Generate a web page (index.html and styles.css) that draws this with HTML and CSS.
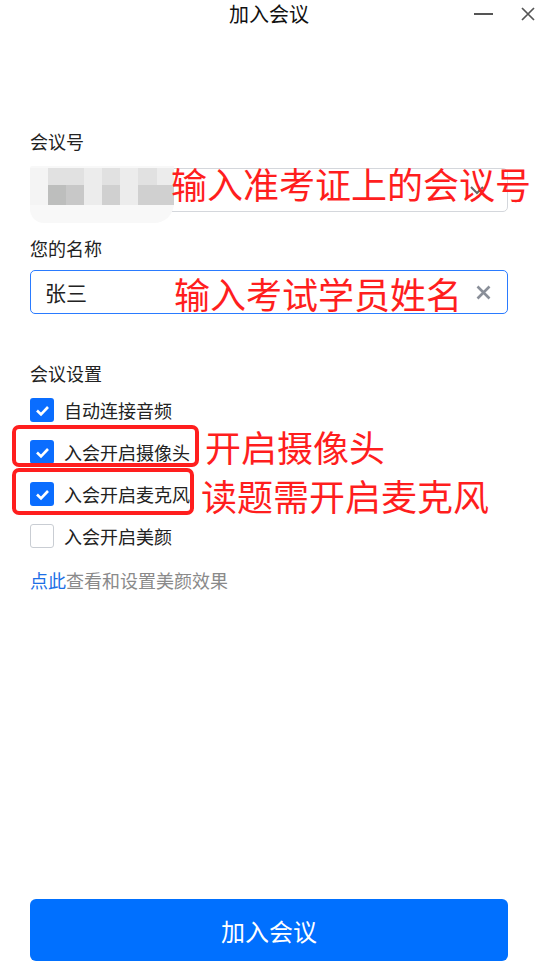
FILE: index.html
```html
<!DOCTYPE html>
<html lang="zh-CN">
<head>
    <meta charset="UTF-8">
    <meta name="viewport" content="width=device-width, initial-scale=1.0">
    <title>加入会议</title>
    <link rel="stylesheet" href="styles.css">
</head>
<body>

    <div class="window">
        <div class="titlebar">
            <span class="title">加入会议</span>
            <div class="controls">
                <svg width="19" height="4" viewBox="0 0 19 4"><line x1="0" y1="2" x2="19" y2="2" stroke="#555" stroke-width="2"/></svg>
                <svg width="14" height="14" viewBox="0 0 14 14"><path d="M1 1 L13 13 M13 1 L1 13" stroke="#555" stroke-width="1.7" fill="none"/></svg>
            </div>
        </div>

        <div class="content">
            <div class="label first">会议号</div>
            <div class="input input-number">
                <svg width="14" height="9" viewBox="0 0 14 9"><path d="M1 1 L7 7 L13 1" stroke="#666" stroke-width="2" fill="none"/></svg>
            </div>

            <div class="label second">您的名称</div>
            <div class="input input-name">
                <span class="value">张三</span>
                <svg width="15" height="15" viewBox="0 0 15 15"><path d="M1.5 1.5 L13.5 13.5 M13.5 1.5 L1.5 13.5" stroke="#8a8f99" stroke-width="2.6" fill="none"/></svg>
            </div>

            <div class="label third">会议设置</div>
            <div class="options">
                <div class="option">
                    <span class="box checked"><svg width="23" height="23" viewBox="0 0 23 23"><path d="M6 11.5 L10 15.5 L17 8" stroke="#fff" stroke-width="2.6" fill="none"/></svg></span>
                    <span>自动连接音频</span>
                </div>
                <div class="option">
                    <span class="box checked"><svg width="23" height="23" viewBox="0 0 23 23"><path d="M6 11.5 L10 15.5 L17 8" stroke="#fff" stroke-width="2.6" fill="none"/></svg></span>
                    <span>入会开启摄像头</span>
                </div>
                <div class="option">
                    <span class="box checked"><svg width="23" height="23" viewBox="0 0 23 23"><path d="M6 11.5 L10 15.5 L17 8" stroke="#fff" stroke-width="2.6" fill="none"/></svg></span>
                    <span>入会开启麦克风</span>
                </div>
                <div class="option">
                    <span class="box"></span>
                    <span>入会开启美颜</span>
                </div>
            </div>

            <div class="link"><span class="link-blue">点此</span>查看和设置美颜效果</div>
        </div>

        <button class="join">加入会议</button>

        <!-- mosaic over the meeting number -->
        <div class="blur">
            <span class="s0"></span><span class="s2"></span><span class="s2"></span><span class="s1"></span><span class="s2"></span><span class="s1"></span><span class="s2"></span><span class="s1"></span>
            <span class="s0"></span><span class="s5"></span><span class="s4"></span><span class="s1"></span><span class="s3"></span><span class="s1"></span><span class="s3"></span><span class="s3"></span>
        </div>

        <!-- annotations -->
        <div class="mark mark-cam"></div>
        <div class="mark mark-mic"></div>
        <div class="note note-number">输入准考证上的会议号</div>
        <div class="note note-name">输入考试学员姓名</div>
        <div class="note note-cam">开启摄像头</div>
        <div class="note note-mic">读题需开启麦克风</div>
    </div>

</body>
</html>
```

FILE: styles.css
```css
body {
    margin: 0;
    background-color: #fff;
    font-family: "Noto Sans CJK SC", "Noto Sans", sans-serif;
    color: #222;
}
.window {
    position: relative;
    width: 543px;
    height: 967px;
    display: flex;
    flex-direction: column;
    overflow: hidden;
}
.titlebar {
    height: 28px;
    display: flex;
    align-items: center;
}
.title {
    flex: 1;
    text-align: center;
    padding-left: 64px;
    font-size: 20px;
    line-height: 28px;
    color: #111;
}
.controls {
    display: flex;
    align-items: center;
    gap: 28px;
    padding-right: 8px;
}
.content {
    padding: 0 35px 0 30px;
}
.label {
    font-size: 18px;
    line-height: 24px;
    color: #222;
}
.label.first {
    margin-top: 101px;
}
.label.second {
    margin-top: 24px;
}
.label.third {
    margin-top: 47px;
}
.input {
    height: 44px;
    box-sizing: border-box;
    border-radius: 5px;
    display: flex;
    align-items: center;
    justify-content: space-between;
}
.input-number {
    margin-top: 15px;
    border: 1px solid #d4d7dc;
    justify-content: flex-end;
    padding-right: 23px;
}
.input-name {
    margin-top: 10px;
    border: 1.5px solid #2a7bff;
    padding: 0 16px 0 14px;
}
.value {
    font-size: 21px;
    color: #222;
}
.options {
    margin-top: 4px;
}
.option {
    height: 42px;
    display: flex;
    align-items: center;
    gap: 10px;
    font-size: 18px;
    color: #222;
}
.box {
    width: 24px;
    height: 24px;
    box-sizing: border-box;
    border-radius: 3px;
    border: 1.5px solid #c9cdd3;
    background-color: #fff;
    display: flex;
    align-items: center;
    justify-content: center;
}
.box.checked {
    border: none;
    background-color: #0a6dff;
}
.link {
    margin-top: 11px;
    font-size: 18px;
    line-height: 24px;
    color: #8a8a8a;
}
.link-blue {
    color: #1c6fe6;
}
.join {
    margin: auto 35px 6px 30px;
    height: 62px;
    border: none;
    border-radius: 6px;
    background-color: #0070ff;
    color: #fff;
    font-family: inherit;
    font-size: 24px;
}

/* mosaic */
.blur {
    position: absolute;
    left: 30px;
    top: 166px;
    width: 144px;
    height: 57px;
    padding-top: 2px;
    box-sizing: border-box;
    background-color: #f8f8f8;
    border-radius: 2px 0 20px 14px;
    display: grid;
    grid-template-columns: 18px 18px 18px 18px 18px 18px 19px 17px;
    grid-template-rows: 17px 20px;
}
.s0 { background-color: #f4f4f4; }
.s1 { background-color: #ececec; }
.s2 { background-color: #e1e1e1; }
.s3 { background-color: #d0d0d0; }
.s4 { background-color: #c8c8c8; }
.s5 { background-color: #bdbebd; }

/* annotations */
.mark {
    position: absolute;
    border: 4px solid #ff1e1e;
    border-radius: 7px;
    box-sizing: border-box;
}
.mark-cam {
    left: 12px;
    top: 425px;
    width: 187px;
    height: 42px;
}
.mark-mic {
    left: 12px;
    top: 468px;
    width: 182px;
    height: 47px;
}
.note {
    position: absolute;
    font-size: 36px;
    line-height: 36px;
    color: #ff1e1e;
    white-space: nowrap;
}
.note-number {
    left: 171px;
    top: 165px;
}
.note-name {
    left: 174px;
    top: 275px;
}
.note-cam {
    left: 205px;
    top: 428px;
}
.note-mic {
    left: 201px;
    top: 477px;
}
```
